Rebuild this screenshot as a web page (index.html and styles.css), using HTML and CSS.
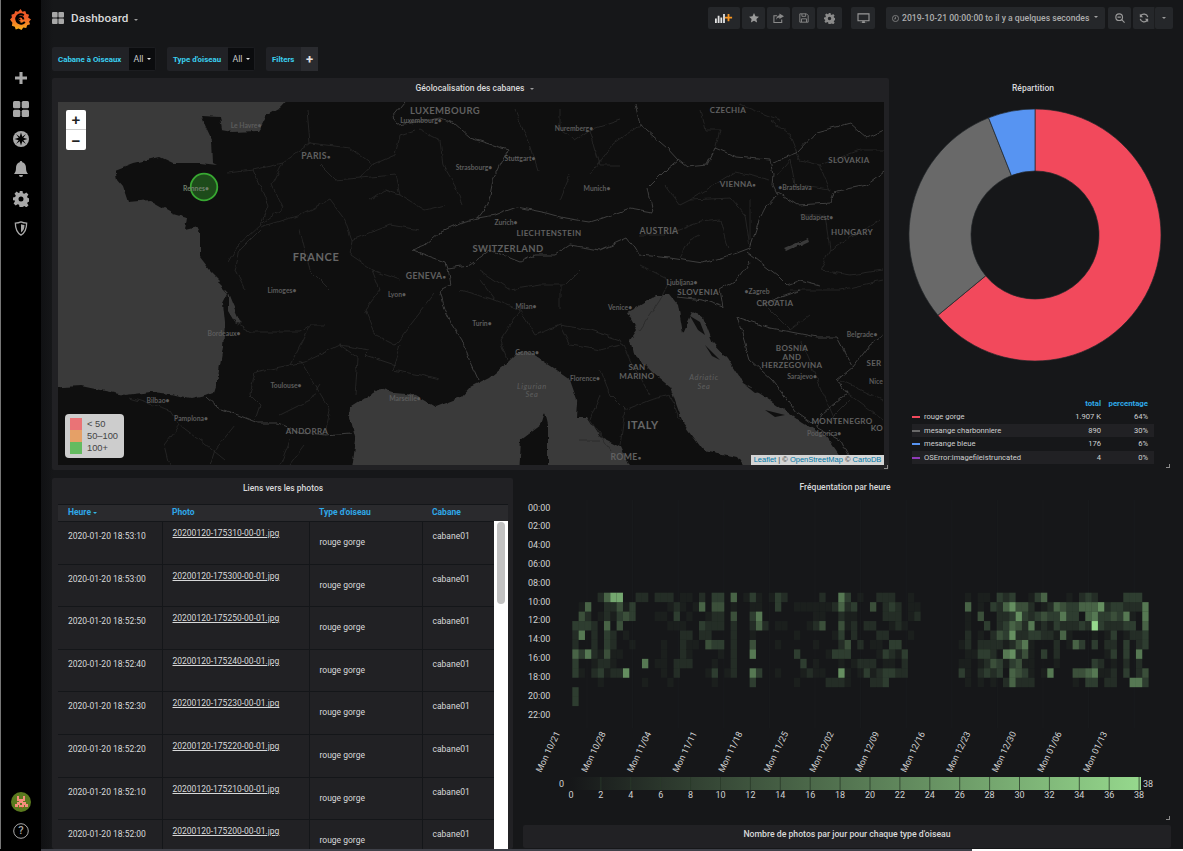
FILE: index.html
```html
<!DOCTYPE html>
<html lang="fr">
<head>
<meta charset="utf-8">
<title>Dashboard</title>
<link rel="stylesheet" href="styles.css">
</head>
<body>
<div class="app">
  <nav class="side">
    <svg class="logo" viewBox="0 0 22 24" width="21" height="23">
      <defs><linearGradient id="gl" x1="0" y1="1" x2="0" y2="0"><stop offset="0" stop-color="#f7b21b"/><stop offset=".6" stop-color="#f15b2a"/><stop offset="1" stop-color="#ee5a24"/></linearGradient></defs>
      <path fill="url(#gl)" d="M11 1l2 3 3-1 1 3 3 1-1 3 3 2-2 2 1 3-3 1-1 3-3-.5-2 2.500-3-1.500-3 1-1-3-3-1 .5-3L0 12l2-2-.5-3 3-1 1-3 3 1z"/>
      <path fill="none" stroke="#000" stroke-width="2" d="M15.500 14.500a5 5 0 1 1-1-7M11 15a3 3 0 1 1 3-3"/>
      <circle cx="10" cy="12" r="1" fill="#000"/>
    </svg>
    <svg class="ic plus" viewBox="0 0 14 14" width="12" height="12"><path d="M5.200 0h3.600v5.200H14v3.600H8.800V14H5.200V8.800H0V5.200h5.200z"/></svg>
    <svg class="ic" viewBox="0 0 16 16" width="16" height="16"><rect width="7.300" height="7.300" rx="1.500"/><rect x="8.700" width="7.300" height="7.300" rx="1.500"/><rect y="8.700" width="7.300" height="7.300" rx="1.500"/><rect x="8.700" y="8.700" width="7.300" height="7.300" rx="1.500"/></svg>
    <svg class="ic" viewBox="0 0 16 16" width="16" height="16"><circle cx="8" cy="8" r="8"/><path fill="#000" d="M8 1.500l1.300 4.200 3.700-2.700-2.700 3.700 4.200 1.300-4.200 1.300 2.700 3.700-3.700-2.700L8 14.500l-1.300-4.200L3 13l2.700-3.700L1.500 8l4.200-1.300L3 3l3.700 2.700z"/></svg>
    <svg class="ic" viewBox="0 0 14 16" width="14" height="16"><path d="M7 0a1.300 1.300 0 0 1 1.300 1.300C11 2 12 4.500 12 7c0 3 .7 4.500 2 6H0c1.300-1.500 2-3 2-6 0-2.500 1-5 3.700-5.700A1.300 1.300 0 0 1 7 0zM5 14h4a2 2 0 0 1-4 0z"/></svg>
    <svg class="ic" viewBox="0 0 16 16" width="16" height="16"><path fill-rule="evenodd" d="M6.500 0h3l.4 2.200 1.500.6 1.900-1.300 2.100 2.100-1.300 1.900.6 1.500 2.300.5v3l-2.200.4-.6 1.500 1.300 1.900-2.100 2.100-1.900-1.300-1.500.6L9.500 16h-3l-.4-2.200-1.500-.6-1.900 1.300-2.100-2.100 1.300-1.900-.6-1.500L0 9.500v-3l2.200-.4.6-1.500L1.500 2.700l2.100-2.100 1.900 1.300 1.500-.6zM8 5.500a2.500 2.500 0 1 0 0 5 2.500 2.500 0 0 0 0-5z"/></svg>
    <svg class="ic" viewBox="0 0 14 16" width="14" height="15"><path fill="none" stroke="#a8a8a8" stroke-width="1.400" d="M7 1c2 1 4 1.300 6 1.300 0 6-1.500 10-6 12.700C2.500 12.300 1 8.300 1 2.300 3 2.300 5 2 7 1z"/><path d="M7 3.500c1.200.5 2.500.8 3.700.8 0 3.700-1 6.200-3.700 8z"/></svg>
    <div class="grow"></div>
    <svg class="avatar" viewBox="0 0 20 20" width="20" height="20"><circle cx="10" cy="10" r="10" fill="#5a7a1e"/><path fill="#f58f7c" d="M6 4h2v3h4V4h2v5h-2v1h3v2h2v3h-3v-2h-1v2H8v-2H7v2H4v-3h2v-2h2V9H6zm3 7v2h2v-2z"/><path fill="#c9401f" d="M8 15h1v1H8zm3 0h1v1h-1z"/></svg>
    <svg class="help" viewBox="0 0 16 16" width="16" height="16"><circle cx="8" cy="8" r="7.300" fill="none" stroke="#a8a8a8"/><text x="8" y="11.300" text-anchor="middle" class="helptext">?</text></svg>
  </nav>

  <main class="main">
    <header class="top">
      <svg class="dashicon" viewBox="0 0 12 12" width="12" height="12"><rect width="5.600" height="5.600" rx="1"/><rect x="6.400" width="5.600" height="5.600" rx="1"/><rect y="6.400" width="5.600" height="5.600" rx="1"/><rect x="6.400" y="6.400" width="5.600" height="5.600" rx="1"/></svg>
      <span class="dashname">Dashboard</span><span class="caret dashcaret"></span>
      <div class="grow"></div>
      <div class="btn w32"><svg viewBox="0 0 20 10" width="18" height="9"><path fill="#e3e3e3" d="M0 5h2v5H0zm3-3h2v8H3zm3 2h2v6H6zm3-4h2v10H9z"/><path fill="#f79520" d="M14 0h2v3h3v2h-3v3h-2V5h-3V3h3z"/></svg></div>
      <div class="btn w23"><svg viewBox="0 0 12 12" width="10" height="10"><path fill="#9a9a9a" d="M6 0l1.800 3.900 4.200.5-3.100 2.900.8 4.200L6 9.400 2.300 11.500l.8-4.200L0 4.400l4.200-.5z"/></svg></div>
      <div class="btn w23"><svg viewBox="0 0 12 12" width="11" height="11"><path fill="none" stroke="#8a8a8a" stroke-width="1.200" d="M9.500 7v3.400H1V3h3.500"/><path fill="#8a8a8a" d="M7 .5l5 3-5 3V5C5.500 5 4.200 5.700 3.500 7.500 3.500 4.500 5 3 7 2.500z"/></svg></div>
      <div class="btn w23"><svg viewBox="0 0 12 12" width="10" height="10"><path fill="none" stroke="#8a8a8a" stroke-width="1.100" d="M1 1h8l2 2v8H1zM3.500 1v3h4.500V1M3 11V7h6v4"/></svg></div>
      <div class="btn w25"><svg viewBox="0 0 16 16" width="11" height="11"><path fill="#8a8a8a" fill-rule="evenodd" d="M6.500 0h3l.4 2.200 1.500.6 1.900-1.300 2.100 2.100-1.300 1.900.6 1.500 2.300.5v3l-2.200.4-.6 1.500 1.300 1.900-2.100 2.100-1.900-1.300-1.500.6L9.500 16h-3l-.4-2.200-1.500-.6-1.900 1.300-2.100-2.100 1.300-1.900-.6-1.500L0 9.500v-3l2.200-.4.6-1.500L1.500 2.700l2.100-2.100 1.900 1.300 1.500-.6zM8 5.500a2.500 2.500 0 1 0 0 5 2.500 2.500 0 0 0 0-5z"/></svg></div>
      <div class="btn w24 ml9"><svg viewBox="0 0 14 12" width="13" height="11"><path fill="none" stroke="#9a9a9a" stroke-width="1.200" d="M1 1h12v7.500H1z"/><path fill="#9a9a9a" d="M5.500 9h3v1.500h2V11h-7v-.5h2z"/></svg></div>
      <div class="btn time">
        <svg class="clock" viewBox="0 0 10 10" width="7" height="7"><circle cx="5" cy="5" r="4.400" fill="none" stroke="#9a9a9a" stroke-width="1"/><path d="M5 2.500V5.500H3" fill="none" stroke="#9a9a9a" stroke-width="1"/></svg>
        <span class="timetext">2019-10-21 00:00:00 to il y a quelques secondes</span><span class="caret up"></span>
      </div>
      <div class="btn w23 ml3"><svg viewBox="0 0 12 12" width="10" height="10"><circle cx="5" cy="5" r="4" fill="none" stroke="#9a9a9a" stroke-width="1.400"/><path d="M8 8l3.500 3.500M3 5h4" stroke="#9a9a9a" stroke-width="1.400"/></svg></div>
      <div class="btn w22 ml2 joined"><svg viewBox="0 0 12 12" width="10" height="10"><path fill="none" stroke="#9a9a9a" stroke-width="1.500" d="M10.500 5A4.700 4.700 0 0 0 2 3.500M1.500 7A4.700 4.700 0 0 0 10 8.500"/><path fill="#9a9a9a" d="M1 .8V5h4zM11 11.200V7H7z"/></svg></div>
      <div class="btn w18"><span class="caret"></span></div>
    </header>

    <section class="vars">
      <div class="var"><span class="vlabel">Cabane à Oiseaux</span><span class="vval">All<span class="caret white"></span></span></div>
      <div class="var"><span class="vlabel">Type d'oiseau</span><span class="vval">All<span class="caret white"></span></span></div>
      <div class="var"><span class="vlabel">Filters</span><span class="vplus">+</span></div>
    </section>

    <section class="row1">
      <article class="panel mappanel">
        <h2 class="ptitle maptitle">Géolocalisation des cabanes<span class="caret titlecaret"></span></h2>
        <div class="map">
          <svg class="mapsvg" viewBox="58 102 826 363" width="826" height="363">
            <defs>
              <filter id="wig" filterUnits="userSpaceOnUse" x="40" y="90" width="860" height="390" color-interpolation-filters="sRGB">
                <feTurbulence type="fractalNoise" baseFrequency=".11" numOctaves="2" seed="4" result="n"/>
                <feDisplacementMap in="SourceGraphic" in2="n" scale="5" xChannelSelector="R" yChannelSelector="G"/>
                <feGaussianBlur stdDeviation=".25"/>
              </filter>
            </defs>
            <rect x="58" y="102" width="826" height="363" fill="#0f0f0f"/>
            <g fill="#3a3a3a" filter="url(#wig)">
              <path d="M45 90H297L280 108 267 115 262 125 258 131 233 132 222 130 220 117 202 116 205 125 212 140 213 163 217 165 200 163 173 163 160 157 133 163 115 170 117 180 123 187 128 202 150 200 173 213 187 217 185 230 197 227 200 233 200 257 210 270 220 280 218 283 228 293 223 303 225 323 223 347 218 377 213 392 205 395 191 398 170 394 151 392 125 395 100 390 81 386 45 388Z"/>
              <path d="M228 293L232 303 241 323 237 325 228 310Z"/>
              <path d="M351 475L356 440 350 417 351 407 381 388 395 393 415 395 435 407 461 397 470 387 490 377 507 363 517 353 530 353 553 368 570 380 578 403 577 417 587 417 600 437 620 447 633 475 548 475 548 425 545 412 541 425 521 440 519 475Z"/>
              <path d="M627 312L637 307 657 295 670 295 678 305 683 333 692 313 703 317 713 343 727 358 743 383 770 400 803 423 827 437 843 460 849 475H750L737 457 703 450 683 423 670 387 653 373 633 353 630 340 637 330Z"/>
              <path d="M783 249L808 238 809 241 786 252Z"/>
            </g>
            <g fill="#0f0f0f"><path d="M690 316L700 322 705 335 698 330ZM705 345L715 355 720 360 712 356ZM745 385L760 392 755 393ZM765 410L785 415 775 417Z"/></g>
            <g class="b2" filter="url(#wig)">
              <path d="M227 173L253 170 283 163 310 143 307 110M283 163L272 185 283 208 260 225 238 245 228 262M310 143L350 148 372 165 360 178 335 180 320 165M372 165L395 155 400 135 415 130M360 178L395 175 400 195 425 210 445 205M400 195L385 190 370 200M253 170L268 205 262 222M260 227L300 215 330 200 345 220 352 240 350 255 372 270 400 280M300 230L310 270 330 290M262 228L240 250 235 270 245 290M352 240L390 225 420 230M372 270L380 290 365 310 375 335 395 345 435 293M235 323L252 332 300 332 310 325 325 325M310 325L300 345 290 365 255 372 250 395 260 405 255 420M290 365L305 362 340 345 370 350 365 355 395 365M340 345L358 358 355 395M400 345L392 370 420 375 440 380M320 385L310 400 280 415M300 360L330 410 325 435M130 398L170 410 180 425 200 440 225 460M180 425L165 445 170 465M235 425L215 450 210 465M290 440L280 465M305 445L290 465"/>
              <path d="M420 130L440 140 443 165 455 185 462 205M515 110L530 145 538 170M560 110L560 130 575 140 590 130 600 165 620 165M570 175L560 200M590 130L620 120M640 125L612 145 590 175M460 290L495 300 520 310 535 335 560 325 590 330 620 340M495 300L480 280M520 310L500 340 507 360M560 325L570 345 600 350 620 345M620 340L630 360 650 395M600 370L610 395 625 410 620 445M625 410L650 400 670 395 680 420M600 395L590 420 610 450M580 440L600 440M640 265L670 280 660 300 640 330M480 270L510 290 540 285 565 285 580 270M560 285L560 310"/>
              <path d="M690 200L730 198 745 215 750 248M665 185L680 205 690 200 735 172 770 180M640 235L665 235 700 222 720 220 728 250M680 258L690 240 700 235M750 200L750 240M800 160L820 165 830 190M777 175L790 160 795 185 830 190M820 165L860 150 883 150M800 215L825 215 830 250 820 270 850 275 883 270M830 250L880 220M790 290L840 290 883 280M770 120L790 135 800 160M700 110L705 130 720 130 715 150M740 105L780 120M840 380L883 400M850 400L830 420M800 340L835 420M760 300L790 330 810 315M847 393L883 420"/>
            </g>
            <g class="b1" filter="url(#wig)">
              <path d="M405 102L392 118 398 125 440 118 453 123 470 138 483 142 508 150 500 165 493 180 488 205 478 218 462 222 440 232 425 245 412 250 445 262 447 268 450 285 440 290 445 310 452 325 462 340 470 362 478 380"/>
              <path d="M478 218L495 215 517 207 547 213 565 218 590 222 603 218 630 208 653 212 648 188 668 168 678 160 667 148 640 125 635 103"/>
              <path d="M678 160L687 167 707 165 715 148 737 157 770 160 773 175 772 185 777 195 765 208 760 218 750 248 737 253 703 263 670 258 640 255 627 238 600 250 570 245 555 255 535 255 520 262 490 250 470 265 447 268"/>
              <path d="M773 162L797 153 817 132 850 123 867 138 884 130M777 192L797 205 830 203 833 192 867 185 884 172"/>
              <path d="M206 397L218 408 238 415 258 423 278 423 300 432 325 435 351 433"/>
              <path d="M747 252L777 275 787 285 800 280 820 285M677 297L703 300 723 307 720 290 737 280 750 262"/>
              <path d="M737 317L750 360 772 380 797 413 817 427 823 413 847 393 837 380 853 367 837 337 817 337 770 328 737 317"/>
              <path d="M853 367L870 345 884 335M800 290L760 305M817 427L840 440 850 460"/>
            </g>
            <g class="big">
              <text x="445" y="114" class="m95">LUXEMBOURG</text>
              <text x="728" y="113" class="m8">CZECHIA</text>
              <text x="316" y="159" class="m85">PARIS<tspan class="dot">•</tspan></text>
              <text x="738" y="187" class="m8">VIENNA<tspan class="dot">•</tspan></text>
              <text x="849" y="163" class="m8">SLOVAKIA</text>
              <text x="852" y="235" class="m8">HUNGARY</text>
              <text x="549" y="236" class="m8">LIECHTENSTEIN</text>
              <text x="508" y="252" class="m95">SWITZERLAND</text>
              <text x="659" y="234" class="m85">AUSTRIA</text>
              <text x="316" y="261" class="m11">FRANCE</text>
              <text x="426" y="279" class="m85">GENEVA<tspan class="dot">•</tspan></text>
              <text x="698" y="295" class="m8">SLOVENIA</text>
              <text x="775" y="306" class="m8">CROATIA</text>
              <text x="792" y="351" class="m8">BOSNIA</text>
              <text x="792" y="360" class="m8">AND</text>
              <text x="792" y="368" class="m8">HERZEGOVINA</text>
              <text x="874" y="366" class="m8">SER</text>
              <text x="637" y="370" class="m8">SAN</text>
              <text x="637" y="379" class="m8">MARINO</text>
              <text x="842" y="424" class="m8">MONTENEGRO</text>
              <text x="877" y="431" class="m8">KO</text>
              <text x="307" y="434" class="m8">ANDORRA</text>
              <text x="643" y="429" class="m11">ITALY</text>
              <text x="626" y="460" class="m85">ROME<tspan class="dot">•</tspan></text>
            </g>
            <g class="town">
              <text x="421" y="123">Luxembourg•</text>
              <text x="574" y="131">Nuremberg•</text>
              <text x="246" y="128">Le Havre•</text>
              <text x="520" y="161">Stuttgart•</text>
              <text x="474" y="170">Strasbourg•</text>
              <text x="597" y="191">Munich•</text>
              <text x="795" y="190">•Bratislava</text>
              <text x="817" y="220">Budapest•</text>
              <text x="506" y="225">Zurich•</text>
              <text x="282" y="293">Limoges•</text>
              <text x="397" y="297">Lyon•</text>
              <text x="526" y="309">Milan•</text>
              <text x="620" y="310">Venice•</text>
              <text x="682" y="285">Ljubljana•</text>
              <text x="757" y="294">•Zagreb</text>
              <text x="482" y="326">Turin•</text>
              <text x="224" y="336">Bordeaux•</text>
              <text x="527" y="355">Genoa•</text>
              <text x="862" y="337">Belgrade•</text>
              <text x="802" y="379">Sarajevo•</text>
              <text x="286" y="388">Toulouse•</text>
              <text x="876" y="384">Nice</text>
              <text x="405" y="401">Marseille•</text>
              <text x="585" y="381">Florence•</text>
              <text x="824" y="436">Podgorica•</text>
              <text x="158" y="403">Bilbao•</text>
              <text x="191" y="421">Pamplona•</text>
            </g>
            <g class="sea">
              <text x="532" y="389">Ligurian</text><text x="532" y="397">Sea</text>
              <text x="704" y="380">Adriatic</text><text x="704" y="389">Sea</text>
            </g>
            <circle cx="204" cy="187" r="13.300" fill="#33a02c" fill-opacity=".42" stroke="#38a832" stroke-width="1.800"/>
            <text x="196" y="191" class="rennes">Rennes•</text>
          </svg>
          <div class="zoomctl"><span class="zbtn zsep">+</span><span class="zbtn">−</span></div>
          <div class="legend">
            <div class="lrow"><i class="sw red"></i>&lt; 50</div>
            <div class="lrow"><i class="sw org"></i>50–100</div>
            <div class="lrow"><i class="sw grn"></i>100+</div>
          </div>
          <div class="attr"><a>Leaflet</a> | © <a>OpenStreetMap</a> © <a>CartoDB</a></div>
        </div>
        <i class="handle h-map"></i>
      </article>

      <article class="piepanel">
        <h2 class="ptitle">Répartition</h2>
        <svg class="pie" viewBox="895 100 276 270" width="276" height="270">
          <g stroke="#23262a" stroke-width=".7">
            <path fill="#f2495c" d="M1035 108A126 126 0 1 1 937.900 314.300L985.700 274.800A64 64 0 1 0 1035 170Z"/>
            <path fill="#696969" d="M937.900 314.300A126 126 0 0 1 988.600 116.800L1011.400 174.500A64 64 0 0 0 985.700 274.800Z"/>
            <path fill="#5794f2" d="M988.600 116.800A126 126 0 0 1 1035 108V170A64 64 0 0 0 1011.400 174.500Z"/>
          </g>
        </svg>
        <table class="ptable">
          <thead><tr><th></th><th class="num">total</th><th class="num pc">percentage</th></tr></thead>
          <tbody>
            <tr><td><i class="key kr"></i>rouge gorge</td><td class="num">1.907 K</td><td class="num pc">64%</td></tr>
            <tr class="st"><td><i class="key kg"></i>mesange charbonniere</td><td class="num">890</td><td class="num pc">30%</td></tr>
            <tr><td><i class="key kb"></i>mesange bleue</td><td class="num">176</td><td class="num pc">6%</td></tr>
            <tr class="st"><td><i class="key kp"></i>OSError:imagefileistruncated</td><td class="num">4</td><td class="num pc">0%</td></tr>
          </tbody>
        </table>
        <i class="handle h-pie"></i>
      </article>
    </section>

    <section class="row2">
      <article class="panel tablepanel">
        <h2 class="ptitle">Liens vers les photos</h2>
        <div class="tablewrap">
          <table class="photos">
            <colgroup><col class="c1"><col class="c2"><col class="c3"><col class="c4"></colgroup>
            <thead><tr><th>Heure <span class="caret blue"></span></th><th>Photo</th><th>Type d'oiseau</th><th>Cabane</th></tr></thead>
            <tbody>
              <tr><td>2020-01-20 18:53:10</td><td class="lnk"><a>20200120-175310-00-01.jpg</a></td><td class="typ">rouge gorge</td><td>cabane01</td></tr>
              <tr><td>2020-01-20 18:53:00</td><td class="lnk"><a>20200120-175300-00-01.jpg</a></td><td class="typ">rouge gorge</td><td>cabane01</td></tr>
              <tr><td>2020-01-20 18:52:50</td><td class="lnk"><a>20200120-175250-00-01.jpg</a></td><td class="typ">rouge gorge</td><td>cabane01</td></tr>
              <tr><td>2020-01-20 18:52:40</td><td class="lnk"><a>20200120-175240-00-01.jpg</a></td><td class="typ">rouge gorge</td><td>cabane01</td></tr>
              <tr><td>2020-01-20 18:52:30</td><td class="lnk"><a>20200120-175230-00-01.jpg</a></td><td class="typ">rouge gorge</td><td>cabane01</td></tr>
              <tr><td>2020-01-20 18:52:20</td><td class="lnk"><a>20200120-175220-00-01.jpg</a></td><td class="typ">rouge gorge</td><td>cabane01</td></tr>
              <tr><td>2020-01-20 18:52:10</td><td class="lnk"><a>20200120-175210-00-01.jpg</a></td><td class="typ">rouge gorge</td><td>cabane01</td></tr>
              <tr><td>2020-01-20 18:52:00</td><td class="lnk"><a>20200120-175200-00-01.jpg</a></td><td class="typ">rouge gorge</td><td>cabane01</td></tr>
            </tbody>
          </table>
          <div class="vscroll"><div class="thumb"></div></div>
        </div>
      </article>

      <div class="rightcol">
        <article class="heatpanel">
          <h2 class="ptitle">Fréquentation par heure</h2>
          <svg id="heat" class="heat" viewBox="519 497 652 323" width="652" height="323">
            <defs><linearGradient id="lg"><stop offset="0" stop-color="#161719"/><stop offset="1" stop-color="#96d98d"/></linearGradient></defs>
            <g id="grid"></g>
            <g id="cells"></g>
            <g id="ylabels" class="axis"></g>
            <g id="xlabels" class="axis"></g>
            <rect x="571" y="777" width="570" height="13" fill="url(#lg)"/>
            <g id="ticks" class="axis"></g>
          </svg>
          <i class="handle h-heat"></i>
        </article>
        <article class="panel lastpanel"><h2 class="ptitle">Nombre de photos par jour pour chaque type d'oiseau</h2></article>
      </div>
    </section>
  </main>
</div>
<div class="hbar"><i class="hb-a"></i><i class="hb-b"></i><i class="hb-c"></i></div>
<script src="script.js"></script>
</body>
</html>
```

FILE: styles.css
```css
* { box-sizing: border-box; }
html, body { margin: 0; height: 100%; overflow: hidden; }
body { background: #161719; color: #d8d9da; font-family: Roboto, "Liberation Sans", sans-serif; font-size: 8.5px; width: 1183px; height: 851px; }
.app { display: flex; height: 849px; }
.grow { flex: 1; }

/* sidebar */
.side { width: 41px; flex: none; background: #000; border-left: 1px solid #777; display: flex; flex-direction: column; align-items: center; padding: 8px 1px 10px 0; }
.side .ic { fill: #a8a8a8; margin-top: 14px; }
.side .plus { margin-top: 41px; margin-bottom: 3px; }
.logo { flex: none; }
.avatar { margin-bottom: 11px; }
.helptext { font: 500 11px Roboto, sans-serif; fill: #a8a8a8; }

/* top bar */
.main { flex: 1; min-width: 0; padding: 7px 12px 0 11px; display: flex; flex-direction: column; background: linear-gradient(90deg, #101113 0, #161719 12px); }
.top { display: flex; align-items: center; height: 22px; flex: none; margin-right: -2px; }
.dashicon { fill: #a8a8a8; }
.dashname { margin-left: 7px; font-size: 11.700px; font-weight: 500; color: #d8d9da; letter-spacing: .1px; }
.dashcaret { margin-left: 6px; margin-top: 3px; }
.btn { height: 22px; background: #25272a; border-radius: 2px; display: flex; align-items: center; justify-content: center; margin-left: 2px; flex: none; }
.w32 { width: 32px; } .w23 { width: 23px; } .w25 { width: 25px; } .w24 { width: 24px; } .w22 { width: 22px; } .w18 { width: 18px; }
.ml9 { margin-left: 9px; } .ml3 { margin-left: 3px; } .ml2 { margin-left: 2px; }
.joined { margin-right: -2px; border-right: 1px solid #1c1d1f; border-radius: 2px 0 0 2px; }
.time { width: 219px; margin-left: 11px; justify-content: flex-start; padding-left: 6px; }
.clock { flex: none; }
.timetext { margin-left: 3px; font-size: 8.650px; font-weight: 500; color: #adadad; white-space: nowrap; }
.caret { display: inline-block; width: 0; height: 0; border: 2.500px solid transparent; border-top-color: #9a9a9a; border-bottom: 0; }
.caret.up { margin-left: 5px; margin-top: -3px; border-top-color: #a3a3a3; }
.caret.white { border-top-color: #e6e6e6; margin-left: 3px; }
.caret.blue { border-top-color: #33b5e5; vertical-align: middle; }
.titlecaret { margin-left: 5px; vertical-align: middle; }

/* variables */
.vars { display: flex; gap: 11px; margin-top: 18px; height: 24px; flex: none; }
.var { display: flex; height: 24px; }
.vlabel { background: #212226; color: #3ad0f0; font-weight: 700; font-size: 7.900px; padding: 0 6px; display: flex; align-items: center; border-radius: 2px 0 0 2px; white-space: nowrap; }
.var:first-child .vlabel { width: 77px; }
.var:nth-child(2) .vlabel { width: 61px; }
.var:nth-child(3) .vlabel { width: 35px; }
.vval { background: #0b0c0e; color: #c8c9ca; width: 27px; font-size: 8.800px; display: flex; align-items: center; justify-content: center; border-radius: 0 2px 2px 0; border: 1px solid #1c1d20; border-left: 0; }
.vplus { background: #2a2b2f; color: #e0e0e0; width: 17px; display: flex; align-items: center; justify-content: center; font-weight: 700; font-size: 13px; }

/* panels */
.panel { background: #212124; position: relative; border-radius: 2px; }
.ptitle { margin: 0; text-align: center; font-size: 8.500px; font-weight: 500; color: #d8d9da; line-height: 20px; height: 24px; }
.maptitle { padding-left: 7px; }
.row1 { display: flex; gap: 6px; margin-top: 7px; height: 392px; flex: none; }
.mappanel { width: 837px; padding: 0 5px 0 6px; }
.map { position: relative; width: 826px; height: 363px; overflow: hidden; }
.mapsvg { display: block; }
.b1 { fill: none; stroke: #444; stroke-width: .9; }
.b2 { fill: none; stroke: #2a2a2a; stroke-width: .8; }
.big text { font: 700 8px Lato, sans-serif; fill: #606060; text-anchor: middle; letter-spacing: .35px; }
.big .m85 { font-size: 8.700px; }
.big .m95 { font-size: 9.500px; }
.big .m11 { font-size: 11px; letter-spacing: .6px; fill: #666; }
.dot { font-size: 6px; }
.town text { font: 700 6.800px Lato, sans-serif; fill: #5c5c5c; text-anchor: middle; }
.sea text { font: italic 400 7.500px Lato, sans-serif; fill: #5e5e5e; text-anchor: middle; letter-spacing: .6px; }
.rennes { font: 700 6.800px Lato, sans-serif; fill: #6e7e6a; text-anchor: middle; }

.zoomctl { position: absolute; left: 8px; top: 8px; width: 20px; height: 40px; background: #fff; border-radius: 2px; display: flex; flex-direction: column; }
.zbtn { height: 20px; display: flex; align-items: center; justify-content: center; color: #222; font: 700 15px "Liberation Sans", sans-serif; }
.zsep { border-bottom: 1px solid #ccc; }
.legend { position: absolute; left: 7px; bottom: 7px; width: 59px; height: 44px; background: #cdcdcd; border-radius: 4px; padding: 4px 5px; color: #444; font: 9.300px/12px "Liberation Sans", sans-serif; }
.lrow { display: flex; align-items: center; height: 12px; }
.sw { width: 12px; height: 12px; margin-right: 5px; flex: none; }
.red { background: #ea7376; } .org { background: #e5a067; } .grn { background: #64bb60; }
.attr { position: absolute; right: 0; bottom: 0; width: 133px; height: 10px; background: #d5d5d5; color: #333; font: 7.500px/10px "Liberation Sans", sans-serif; text-align: center; white-space: nowrap; }
.attr a { color: #0078a8; }
.handle { position: absolute; width: 4px; height: 4px; border-right: 1px solid #8a8a8a; border-bottom: 1px solid #8a8a8a; }
.h-map { right: 1px; bottom: 1px; }
.h-pie { right: 1px; bottom: 2px; }
.h-heat { right: 1px; bottom: 5px; }

/* pie */
.piepanel { flex: 1; position: relative; }
.pie { display: block; margin-top: -1px; }
.ptable { border-collapse: collapse; margin: 26px 0 0 17px; width: 242px; font-size: 7.600px; color: #cfd0d1; }
.ptable th { height: 13px; padding: 0; color: #2fa8e8; font-weight: 700; font-size: 7.800px; text-align: right; }
.ptable td { height: 13.500px; padding: 0; white-space: nowrap; }
.ptable .num { text-align: right; width: 45px; }
.ptable .pc { width: 53px; padding-right: 6px; }
.ptable .st { background: #212124; }
.key { display: inline-block; width: 8px; height: 2px; margin-right: 4px; vertical-align: middle; }
.kr { background: #f2495c; } .kg { background: #696969; } .kb { background: #5794f2; } .kp { background: #8f3bb8; }

/* table panel */
.row2 { display: flex; gap: 6px; margin-top: 8px; flex: 1; min-height: 0; }
.tablepanel { width: 461px; flex: none; padding: 0 5px 0 6px; overflow: hidden; }
.tablepanel .ptitle { height: 26px; line-height: 20px; }
.tablewrap { position: relative; height: 345px; overflow: hidden; }
.photos { border-collapse: collapse; table-layout: fixed; width: 450px; font-size: 8.500px; color: #d8d9da; }
.c1 { width: 104px; } .c2 { width: 147px; } .c3 { width: 113px; } .c4 { width: 86px; }
.photos th { height: 17px; background: #2a2a2d; color: #2fa8e8; font-weight: 700; text-align: left; padding: 0 0 2px 10px; border-top: 1px solid #141619; border-bottom: 1px solid #141619; font-size: 8.500px; }
.photos td { height: 42.600px; padding: 9px 0 0 10px; vertical-align: top; border-bottom: 1px solid #141619; border-right: 1px solid #141619; white-space: nowrap; }
.photos td:last-child { border-right: 0; }
.photos .lnk { padding-top: 6px; }
.photos .typ { padding-top: 15px; }
.lnk a { text-decoration: underline; }
.vscroll { position: absolute; right: 0; top: 17px; bottom: 0; width: 14px; background: #fff; padding: 1px 3px; }
.thumb { height: 82px; background: #c1c1c1; border-radius: 4px; }

/* heat */
.rightcol { flex: 1; min-width: 0; display: flex; flex-direction: column; }
.heatpanel { position: relative; height: 347px; flex: none; }
.heatpanel .ptitle { height: 19px; line-height: 18px; }
.heat { display: block; }
.axis text { font: 400 9px Roboto, sans-serif; fill: #d0d1d2; }
.lastpanel { margin-left: 4px; height: 23px; flex: none; }
.lastpanel .ptitle { line-height: 18px; font-size: 8.700px; }

.hbar { display: flex; height: 2px; }
.hb-a { width: 41px; background: #000; }
.hb-b { width: 931px; background: #3e4048; }
.hb-c { flex: 1; background: #fff; }
```

FILE: script.js
```js
// Heatmap data: one string per row (hour), "column:level" pairs.
var rows = [
"4:2 5:5 6:8 7:8 10:2 11:2 13:2 14:2 15:2 17:1 18:1 20:2 22:3 23:3 25:5 27:1 28:3 29:1 31:1 32:3 33:2 39:2 42:6 43:3 45:1 48:2 49:2 50:2 53:1 62:1 64:1 65:1 67:3 68:2 69:3 72:1 73:3 74:5 78:1 80:2 81:3 82:2 87:3 88:3 89:3",
"1:1 2:5 5:2 6:2 7:4 8:1 9:3 15:1 16:2 17:1 19:1 20:5 22:4 23:4 25:1 28:1 29:1 32:3 35:1 36:1 37:1 38:1 39:1 40:1 41:2 42:5 43:2 44:3 47:4 49:2 50:3 51:2 53:1 54:1 62:5 64:1 66:3 67:2 68:5 69:7 70:4 71:4 72:2 74:1 75:2 76:5 77:4 78:3 79:3 80:5 81:5 82:5 83:7 84:2 85:3 86:3 87:2 88:2 89:2 90:6",
"1:4 2:2 4:1 5:2 6:1 7:3 8:4 9:3 13:1 14:1 16:3 18:1 21:1 22:2 23:2 25:4 28:3 29:6 38:1 39:1 42:2 43:1 44:1 49:2 50:2 51:2 53:1 54:2 62:1 64:4 67:2 68:2 69:3 70:7 71:3 72:2 73:3 74:4 75:3 76:3 77:6 78:3 79:3 81:5 82:6 83:3 84:3 85:4 86:3 87:6 88:1 90:6",
"0:3 1:3 2:3 3:2 5:5 7:4 15:1 16:1 17:1 20:3 21:2 22:2 23:2 25:2 28:2 29:5 30:2 32:1 33:1 37:1 38:2 39:4 42:4 43:1 44:2 46:2 47:2 50:1 51:2 52:1 62:1 65:3 67:2 68:3 69:5 70:4 71:2 72:6 73:1 74:2 75:1 76:3 77:2 78:2 79:2 80:3 81:2 82:10 83:3 84:2 85:2 86:2 87:3 88:3 90:5",
"0:2 1:6 3:2 5:3 6:2 8:1 17:2 18:2 20:2 21:2 25:2 28:1 35:1 41:1 42:3 44:2 48:2 49:2 53:1 62:2 64:1 66:2 67:4 68:3 69:7 70:2 71:2 72:3 73:3 74:2 75:2 76:1 77:5 78:1 82:1 84:1 85:3 87:1 88:2 89:2 90:3",
"0:2 3:2 5:3 6:2 9:1 14:1 17:2 18:1 19:1 21:4 22:3 23:3 25:2 28:4 32:1 38:1 42:2 43:4 45:2 47:1 48:1 50:3 51:3 61:1 62:2 64:2 65:2 66:2 67:2 68:1 69:2 70:4 71:6 72:1 76:2 78:1 79:5 80:3 82:3 84:2 85:2 87:3 89:2 90:3",
"0:5 1:3 2:6 3:2 4:1 5:4 6:1 7:1 14:1 17:2 18:1 23:1 25:2 28:6 35:3 40:1 41:3 42:3 43:3 48:1 49:3 50:2 51:1 52:3 62:1 63:1 64:3 65:3 66:2 68:6 69:7 70:2 71:4 72:1 74:3 76:2 84:1 85:3 87:3 89:6",
"0:3 3:1 4:2 5:2 6:1 11:6 13:1 14:1 16:2 17:2 18:2 22:1 25:2 36:3 38:1 42:1 44:1 45:2 46:2 47:2 49:1 50:1 52:2 61:1 62:1 64:1 65:2 66:4 67:3 68:1 69:3 70:4 71:1 72:1 76:1 82:3 83:2 85:1 87:2 89:2",
"0:3 1:1 3:2 4:3 5:1 6:2 7:2 8:7 14:1 16:2 21:1 22:3 24:1 25:2 28:6 29:3 32:1 36:1 37:2 38:1 39:1 42:7 43:1 45:1 46:3 47:1 48:2 49:3 50:3 51:2 52:2 61:3 62:1 64:2 65:3 66:2 67:3 69:5 70:4 71:3 72:1 74:1 75:6 79:4 80:4 81:5 82:6 83:1 84:1 85:2 87:3 89:2 90:4",
"4:1 11:1 15:1 22:1 28:3 35:1 40:2 41:2 42:2 43:1 47:2 48:2 49:3 62:1 64:1 66:1 68:2 69:5 70:2 71:2 72:2 79:1 81:3 82:3 84:2 85:2 88:6 89:6 90:3",
"0:3",
"0:3"
];
var NS = "http://www.w3.org/2000/svg";
function el(parent, name, attrs, text) {
  var e = document.createElementNS(NS, name);
  for (var k in attrs) e.setAttribute(k, attrs[k]);
  if (text !== undefined) e.textContent = text;
  parent.appendChild(e);
  return e;
}
var cells = document.getElementById("cells");
var CW = 6.333, CH = 9.45, X0 = 572.3, Y0 = 592.7;
rows.forEach(function (row, r) {
  row.split(" ").forEach(function (p) {
    var a = p.split(":"), c = +a[0], v = +a[1];
    el(cells, "rect", {
      x: X0 + c * CW, y: Y0 + r * CH, width: CW, height: CH,
      fill: "#96d98d", "fill-opacity": Math.pow(v / 10, 1.35).toFixed(3)
    });
  });
});
var grid = document.getElementById("grid");
for (var g = 0; g < 14; g++) {
  var gx = 587 + g * 45.6;
  el(grid, "line", { x1: gx, x2: gx, y1: 500, y2: 728, stroke: "#191b1d", "stroke-width": 1 });
}
var yl = document.getElementById("ylabels");
for (var h = 0; h <= 22; h += 2) {
  var lab = (h < 10 ? "0" : "") + h + ":00";
  el(yl, "text", { x: 528, y: 510.5 + (h / 2) * 18.82 }, lab);
}
var xl = document.getElementById("xlabels");
["10/21","10/28","11/04","11/11","11/18","11/25","12/02","12/09","12/16","12/23","12/30","01/06","01/13"].forEach(function (d, i) {
  var x = 541 + i * 45.6, y = 773;
  el(xl, "text", { x: x, y: y, transform: "rotate(-64 " + x + " " + y + ")" }, "Mon " + d);
});
var t = document.getElementById("ticks");
el(t, "text", { x: 559, y: 787 }, "0");
el(t, "text", { x: 1143, y: 787 }, "38");
for (var v = 0; v <= 38; v += 2) {
  var tx = 571 + (v / 2) * 29.9;
  el(t, "text", { x: tx, y: 798, "text-anchor": "middle" }, String(v));
  if (v > 0) el(t, "line", { x1: tx, x2: tx, y1: 777, y2: 790, stroke: "#2a3a2a", "stroke-width": 0.8 });
}
```
